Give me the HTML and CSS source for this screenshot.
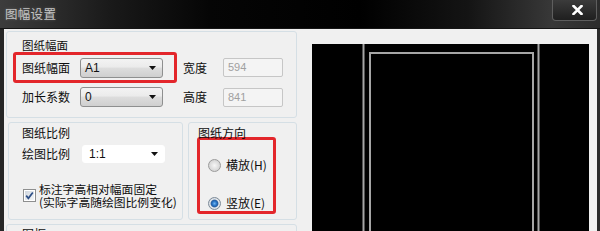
FILE: index.html
```html
<!DOCTYPE html>
<html lang="zh-CN">
<head>
<meta charset="utf-8">
<title>图幅设置</title>
<link rel="stylesheet" href="styles.css">
</head>
<body>
<div class="window">
  <div class="titlebar">
    <span class="title">图幅设置</span>
    <div class="close">
      <svg width="11" height="10" viewBox="0 0 11 10"><path d="M1.5 1 L9.5 9 M9.5 1 L1.5 9" stroke="#fff" stroke-width="2.6" stroke-linecap="square"/></svg>
    </div>
  </div>
  <div class="client">
    <div class="left">
      <div class="group g1">
        <div class="ghead">图纸幅面</div>
        <div class="row1">
          <div class="redbox">
            <span class="lbl">图纸幅面</span>
            <div class="combo"><span class="ctext">A1</span><svg class="arrow" width="7" height="4" viewBox="0 0 7 4"><polygon points="0,0 7,0 3.5,4" fill="#111"/></svg></div>
          </div>
          <span class="dim">宽度</span>
          <div class="field">594</div>
        </div>
        <div class="row2">
          <span class="lbl">加长系数</span>
          <div class="combo"><span class="ctext">0</span><svg class="arrow" width="7" height="4" viewBox="0 0 7 4"><polygon points="0,0 7,0 3.5,4" fill="#111"/></svg></div>
          <span class="dim dim2">高度</span>
          <div class="field">841</div>
        </div>
      </div>
      <div class="pair">
        <div class="group g2">
          <div class="ghead">图纸比例</div>
          <div class="scalerow">
            <span class="lbl lbl-scale">绘图比例</span>
            <div class="combo white"><span class="ctext">1:1</span><svg class="arrow" width="7" height="4" viewBox="0 0 7 4"><polygon points="0,0 7,0 3.5,4" fill="#111"/></svg></div>
          </div>
          <div class="checkrow">
            <svg class="check" width="13" height="13" viewBox="0 0 13 13">
              <defs><linearGradient id="cb" x1="0" y1="0" x2="1" y2="1"><stop offset="0" stop-color="#cfd6de"/><stop offset="1" stop-color="#f4f6f8"/></linearGradient></defs>
              <rect x="0.5" y="0.5" width="12" height="12" fill="#fff" stroke="#8e8f8f"/>
              <rect x="2" y="2" width="9" height="9" fill="url(#cb)"/>
              <path d="M3.2 6.6 L5.4 9.3 L9.8 3.4" fill="none" stroke="#2d4f86" stroke-width="1.7"/>
            </svg>
            <div class="checktext">
              <div class="cline">标注字高相对幅面固定</div>
              <div class="cline">(实际字高随绘图比例变化)</div>
            </div>
          </div>
        </div>
        <div class="group g3">
          <div class="ghead ghead3">图纸方向</div>
          <div class="redbox2">
            <div class="radiorow"><span class="radio"></span><span>横放(H)</span></div>
            <div class="radiorow"><span class="radio on"></span><span>竖放(E)</span></div>
          </div>
        </div>
      </div>
      <div class="group g4">
        <div class="ghead">图框</div>
      </div>
    </div>
    <div class="preview">
      <svg width="277" height="190" viewBox="0 0 277 190">
        <rect x="0" y="0" width="277" height="190" fill="#000"/>
        <line x1="51.5" y1="0" x2="51.5" y2="190" stroke="#a6a6a6" stroke-width="2"/>
        <line x1="226.5" y1="0" x2="226.5" y2="190" stroke="#a6a6a6" stroke-width="2"/>
        <polyline points="58,190 58,9 221,9 221,190" fill="none" stroke="#a6a6a6" stroke-width="2"/>
      </svg>
    </div>
  </div>
</div>
</body>
</html>
```

FILE: styles.css
```css
* { box-sizing: border-box; }
html, body { margin: 0; padding: 0; }
body {
  width: 600px;
  height: 231px;
  overflow: hidden;
  background: #000;
  font-family: "Noto Sans CJK SC", "Noto Sans", sans-serif;
  font-size: 12px;
  color: #0e0e0e;
}
.window { display: flex; flex-direction: column; height: 231px; }

.titlebar {
  height: 29px;
  flex: none;
  display: flex;
  align-items: flex-start;
  background: linear-gradient(90deg, #3d3d3d 0, #1a1a1a 18%, #050505 35%, #000 60%, #141414 78%, #383838 92%, #2c2c2c 100%);
  border-bottom: 1px solid #151515;
}
.title {
  margin: 6px 0 0 5px;
  font-size: 12.5px;
  line-height: 15px;
  color: #c4c4c4;
  letter-spacing: 0.3px;
  text-shadow: 0 0 3px rgba(255,255,255,0.25);
}
.close {
  margin-left: auto;
  margin-right: 3px;
  width: 45px;
  height: 21px;
  border: 1px solid #5e5e5e;
  border-top: none;
  border-radius: 0 0 4px 4px;
  background: linear-gradient(#3b3b3b, #1f1f1f);
  display: flex;
  align-items: center;
  justify-content: center;
  padding-left: 6px;
}

.client {
  flex: 1;
  display: flex;
  background: #f0f0f0;
  border-left: 4px solid #262626;
  border-right: 3px solid #2a2a2a;
  overflow: hidden;
}
.left {
  width: 296px;
  flex: none;
  padding: 2px 0 0 2px;
  display: flex;
  flex-direction: column;
  gap: 4px;
  overflow: hidden;
}
.group {
  border: 1px solid #d5dfe5;
  border-radius: 3px;
  flex: none;
}
.ghead { line-height: 14px; height: 14px; white-space: nowrap; }

.g1 { width: 291px; height: 87px; padding-top: 6px; }
.g1 .ghead { padding-left: 15px; font-size: 11.5px; }
.row1 { display: flex; align-items: center; margin-left: 6px; }
.redbox {
  display: flex;
  align-items: center;
  border: 3px solid #e3262b;
  border-radius: 3px;
  padding: 3px 11px 2px 6px;
}
.lbl { width: 58px; flex: none; line-height: 14px; }
.combo {
  width: 83px;
  height: 20px;
  flex: none;
  display: flex;
  align-items: center;
  justify-content: space-between;
  padding: 0 6px 0 4px;
  border: 1px solid #8e8f8f;
  border-radius: 3px;
  background: linear-gradient(#f3f3f3 0, #ebebeb 45%, #dddddd 50%, #cfcfcf 100%);
  font-family: "Liberation Sans", "DejaVu Sans", sans-serif;
  font-size: 12px;
  color: #111;
}
.combo.white {
  height: 18px;
  border-color: #fff;
  background: #fff;
  padding-left: 6px;
}
.dim { margin-left: 6px; width: 40px; flex: none; line-height: 14px; }
.dim2 { margin-left: 20px; }
.field {
  width: 60px;
  height: 19px;
  flex: none;
  border: 1px solid #c6c6c6;
  border-radius: 2px;
  background: #f4f4f4;
  padding-left: 4px;
  line-height: 17px;
  font-family: "Liberation Sans", "DejaVu Sans", sans-serif;
  font-size: 11px;
  color: #a0a0a0;
}
.row2 { display: flex; align-items: center; margin: 4px 0 0 15px; height: 20px; }

.pair { display: flex; gap: 5px; padding-left: 2px; }
.g2 { width: 175px; height: 98px; padding: 3px 0 0 13px; }
.scalerow { display: flex; align-items: center; margin-top: 5px; }
.lbl-scale { width: 60px; }
.checkrow { display: flex; align-items: center; margin: 19px 0 0 1px; }
.check { flex: none; }
.checktext { margin-left: 3px; white-space: nowrap; }
.cline { height: 13px; line-height: 13px; font-size: 11.8px; }

.g3 { width: 109px; height: 98px; padding: 3px 0 0 8px; }
.ghead3 { height: 11px; padding-left: 1px; }
.redbox2 {
  width: 79px;
  height: 77px;
  border: 3px solid #e3262b;
  border-radius: 3px;
  padding: 18px 0 0 8px;
  display: flex;
  flex-direction: column;
  gap: 24px;
}
.radiorow { display: flex; align-items: center; gap: 5px; height: 14px; line-height: 14px; white-space: nowrap; }
.radio {
  width: 13px;
  height: 13px;
  flex: none;
  border-radius: 50%;
  border: 1px solid #9b9b9b;
  background: radial-gradient(circle at 50% 50%, #f6f6f6 0, #e4e4e4 3px, #d2d2d2 6px);
}
.radio.on {
  border-color: #7d8b99;
  background: radial-gradient(circle at 50% 50%, #6fb4f0 0, #1f6cc0 2.5px, #2c5f9c 3.4px, #e6eaee 4.4px, #d0d4d8 6px);
}

.g4 { width: 291px; height: 40px; padding: 2px 0 0 15px; }

.preview {
  margin: 15px 0 0 12px;
  width: 277px;
  flex: none;
  overflow: hidden;
}
.preview svg { display: block; }
```
